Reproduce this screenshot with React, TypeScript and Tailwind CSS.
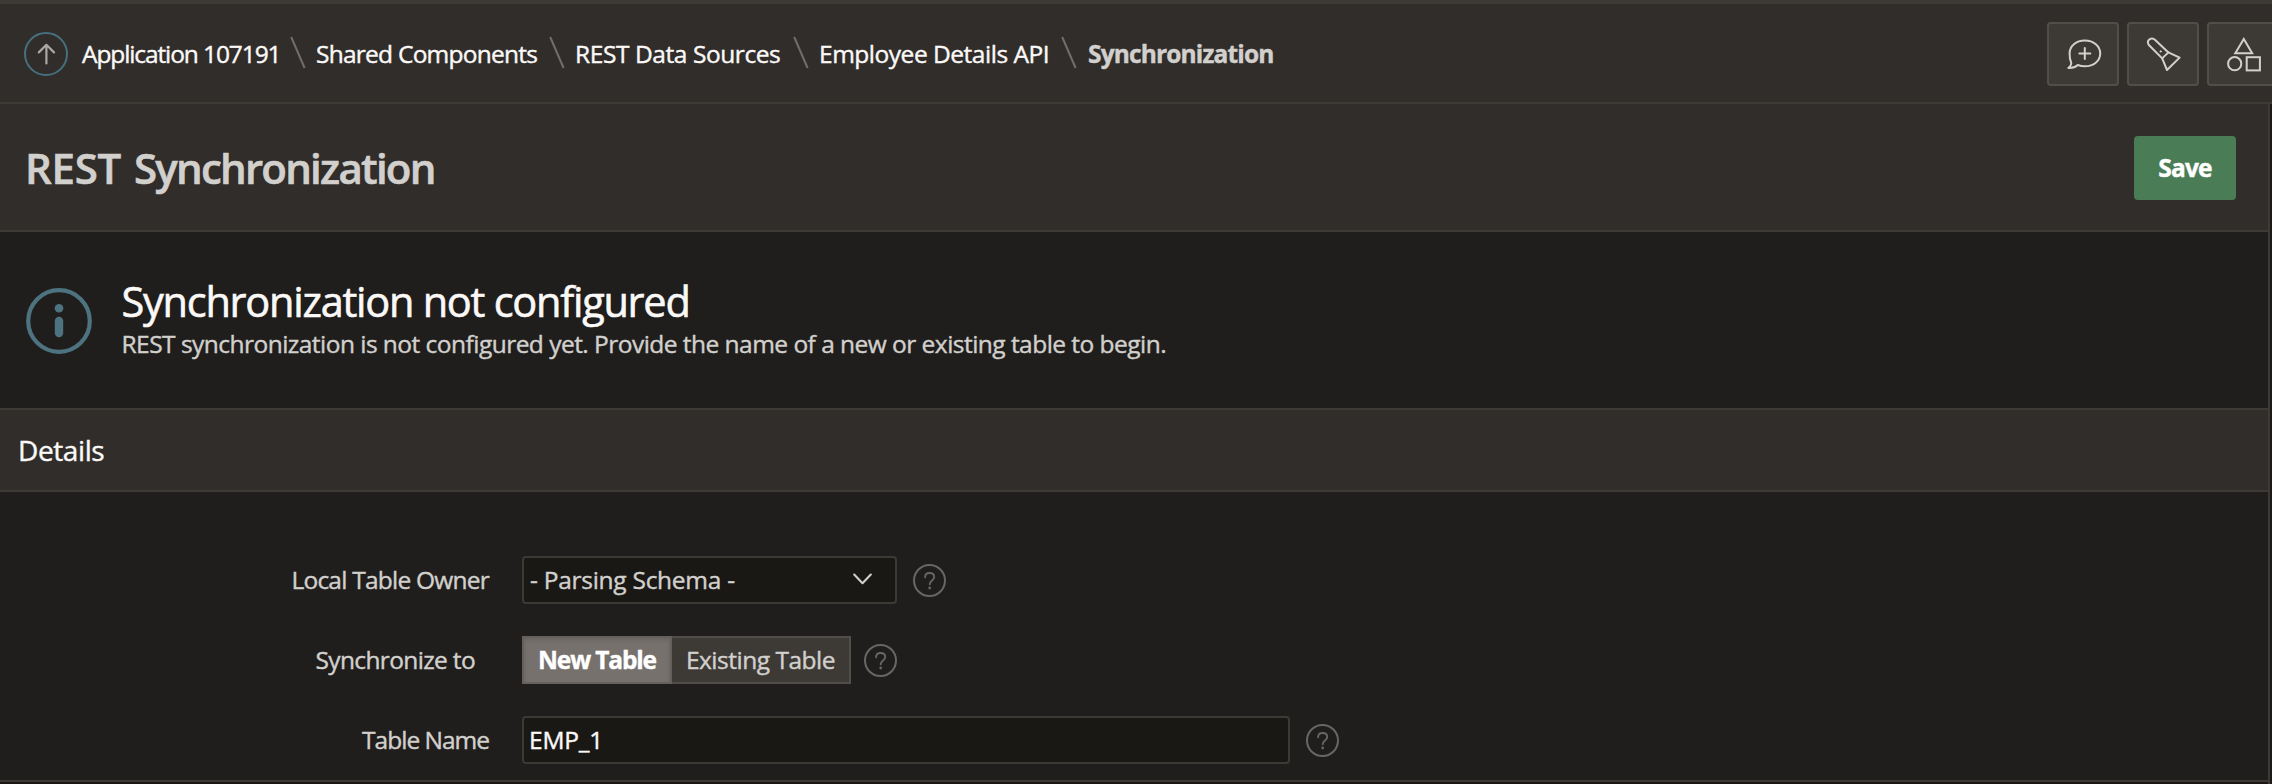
import React from "react";

function Separator() {
  return (
    <svg width="16" height="34" viewBox="0 0 16 34" className="relative -top-px shrink-0" fill="none">
      <path d="M1.2 1 L14.6 32" stroke="#716e6a" strokeWidth="2" />
    </svg>
  );
}

function ToolButton({ label, children }: { label: string; children: React.ReactNode }) {
  return (
    <button
      aria-label={label}
      className="h-16 w-[72px] shrink-0 rounded-[4px] bg-[#3d3a36] shadow-[inset_0_0_0_2px_#514d49]"
    >
      <svg
        width="72"
        height="64"
        viewBox="0 0 72 64"
        fill="none"
        stroke="#d2d0cd"
        strokeWidth="2"
        strokeLinejoin="round"
        strokeLinecap="round"
      >
        {children}
      </svg>
    </button>
  );
}

function HelpIcon() {
  return (
    <svg width="33" height="33" viewBox="0 0 33 33" fill="none" className="shrink-0">
      <circle cx="16.5" cy="16.5" r="15.5" stroke="#686663" strokeWidth="2" />
      <path
        d="M12.1 13.2 C12.1 10.6 14 9 16.6 9 C19.3 9 21.2 10.7 21.2 13.1 C21.2 16.4 16.7 16.5 16.7 20.3"
        stroke="#686663"
        strokeWidth="1.9"
        strokeLinecap="round"
      />
      <circle cx="16.7" cy="24" r="1.4" fill="#686663" />
    </svg>
  );
}

const crumbLink = "whitespace-nowrap text-[#fbf9f8]";

export default function App() {
  return (
    <div className="flex h-[784px] w-[2272px] flex-col overflow-hidden bg-[#201e1c] font-['Open_Sans',sans-serif] text-[24.5px] text-[#d2d0cd] [-webkit-text-stroke:0.4px]">
      <header className="flex h-[104px] shrink-0 items-center justify-between overflow-hidden border-t-4 border-b-2 border-t-[#3d3935] border-b-[#3d3a36] bg-[#312d2a] pl-6">
        <nav className="relative top-px flex items-center">
          <svg width="44" height="44" viewBox="0 0 44 44" fill="none" className="shrink-0">
            <circle cx="22" cy="22" r="21" stroke="#47707f" strokeWidth="2" />
            <path
              d="M22.4 31.5 V12.8 M14.8 20.4 L22.4 12.8 L30 20.4"
              stroke="#aaa8a4"
              strokeWidth="2.2"
              strokeLinecap="round"
              strokeLinejoin="round"
            />
          </svg>
          <span className={`${crumbLink} ml-[14px] w-[208px] tracking-[-1.1px]`}>Application 107191</span>
          <Separator />
          <span className={`${crumbLink} ml-[10px] w-[233px] tracking-[-0.75px]`}>Shared Components</span>
          <Separator />
          <span className={`${crumbLink} ml-[10px] w-[218px] tracking-[-0.42px]`}>REST Data Sources</span>
          <Separator />
          <span className={`${crumbLink} ml-[10px] w-[242px] tracking-[-0.48px]`}>Employee Details API</span>
          <Separator />
          <span className="ml-[11px] font-bold tracking-[-0.85px] whitespace-nowrap">Synchronization</span>
        </nav>
        <div className="relative top-px flex w-[225px] shrink-0 gap-2 overflow-hidden">
          <ToolButton label="Feedback">
            <path d="M24 40 C22.8 37.6 22.6 34.5 22.6 31.5 C22.6 24 29 18.5 37.8 18.5 C46.6 18.5 53.2 24 53.2 31.5 C53.2 39 46.6 44.3 37.8 44.3 C35 44.3 32.8 43.8 30.8 43 C28.3 45.3 25 46.2 21.3 45.9 C23.6 44 24.9 42.2 24 40 Z" />
            <path d="M37.8 26 V37 M32.3 31.5 H43.3" />
          </ToolButton>
          <ToolButton label="Search">
            <path d="M35.2 36.4 L22.1 23.2 C20.4 21.4 20.5 19.2 22 17.8 C23.5 16.3 26.2 16 28.2 17.9 L41.4 30.4 L52.6 35.6 L40 48 Z" />
            <path d="M35.2 36.4 L41.4 30.4" />
            <circle cx="33.7" cy="29.4" r="0.7" fill="#d2d0cd" strokeWidth="1" />
          </ToolButton>
          <ToolButton label="Components">
            <path d="M36.8 17 L45.2 31.3 H28.3 Z" strokeLinejoin="miter" />
            <circle cx="27.7" cy="41.7" r="6.6" />
            <rect x="39.7" y="35.2" width="13.2" height="13.2" strokeLinejoin="miter" />
          </ToolButton>
        </div>
      </header>

      <div className="flex min-h-0 flex-1">
        <main className="flex w-[2268px] shrink-0 flex-col">
          <section className="flex h-32 shrink-0 items-center justify-between border-b-2 border-[#3d3a36] bg-[#312d2a] pt-[2px] pr-8 pl-[25px]">
            <h1 className="flex gap-[13px] text-[42px] leading-[60px] font-semibold whitespace-nowrap [-webkit-text-stroke:0.6px]">
              <span className="tracking-[-0.3px]">REST</span>
              <span className="tracking-[-1.75px]">Synchronization</span>
            </h1>
            <button className="h-16 w-[102px] rounded-[4px] bg-[#4a7d56] pt-px font-bold tracking-[-0.8px] text-white">
              Save
            </button>
          </section>

          <section className="flex h-44 shrink-0 pt-11 pl-[26px]">
            <svg width="66" height="66" viewBox="0 0 66 66" fill="none" className="mt-3 shrink-0">
              <circle cx="33" cy="33" r="30.8" stroke="#4c737f" strokeWidth="4.2" />
              <circle cx="33" cy="20.3" r="4.3" fill="#4c737f" />
              <rect x="28.8" y="28.8" width="8.4" height="20.4" rx="4.2" fill="#4c737f" />
            </svg>
            <div className="ml-[29.5px] pt-px">
              <h2 className="text-[41.5px] leading-[48px] tracking-[-1.25px] whitespace-nowrap text-[#fbf9f8] [-webkit-text-stroke:0.6px]">
                Synchronization not configured
              </h2>
              <p className="leading-[38px] tracking-[-0.53px] whitespace-nowrap">
                REST synchronization is not configured yet. Provide the name of a new or existing table to begin.
              </p>
            </div>
          </section>

          <section className="flex h-[84px] shrink-0 items-center border-y-2 border-[#3d3a36] bg-[#312d2a] pl-[18px]">
            <h3 className="text-[28px] tracking-[-0.4px] text-[#fbf9f8]">Details</h3>
          </section>

          <form className="flex h-[290px] shrink-0 flex-col gap-8 border-b-2 border-[#3d3a36] pt-16">
            <div className="flex h-12 items-center">
              <label className="w-[489px] text-right tracking-[-0.77px] whitespace-nowrap">Local Table Owner</label>
              <div className="ml-[33px] flex h-12 w-[375px] items-center justify-between rounded-[4px] border-2 border-[#3d3a36] bg-[#191815] pr-[23px] pl-[6px]">
                <span className="tracking-[-0.27px]">- Parsing Schema -</span>
                <svg width="19" height="12" viewBox="0 0 19 12" fill="none" className="relative -top-px">
                  <path
                    d="M1.2 1.6 L9.5 10.2 L17.8 1.6"
                    stroke="#d2d0cd"
                    strokeWidth="2.1"
                    strokeLinecap="round"
                    strokeLinejoin="round"
                  />
                </svg>
              </div>
              <span className="ml-4">
                <HelpIcon />
              </span>
            </div>

            <div className="flex h-12 items-center">
              <label className="w-[475px] text-right tracking-[-0.65px] whitespace-nowrap">Synchronize to</label>
              <div className="ml-[47px] flex h-12 w-[329px]">
                <button
                  type="button"
                  className="w-[150px] border-2 border-[#65605c] bg-[#76716d] font-bold tracking-[-1.15px] whitespace-nowrap text-white shadow-[inset_0_2px_4px_rgba(0,0,0,0.12)]"
                >
                  New Table
                </button>
                <button
                  type="button"
                  className="w-[179px] border-2 border-l-0 border-[#514d49] bg-[#3d3a36] tracking-[-0.48px] whitespace-nowrap"
                >
                  Existing Table
                </button>
              </div>
              <span className="ml-[13px]">
                <HelpIcon />
              </span>
            </div>

            <div className="flex h-12 items-center">
              <label className="w-[489px] text-right tracking-[-1px] whitespace-nowrap">Table Name</label>
              <div className="ml-[33px] flex h-12 w-[768px] items-center rounded-[4px] border-2 border-[#3d3a36] bg-[#191815] pt-px pl-[5px] tracking-[-0.2px] text-[#fbf9f8]">
                EMP_1
              </div>
              <span className="ml-4">
                <HelpIcon />
              </span>
            </div>
          </form>
          <div className="h-[2px] bg-[#1b1516]" />
        </main>
        <div className="w-[2px] bg-[#3d3935]" />
        <div className="w-[2px] bg-[#1c1a18]" />
      </div>
    </div>
  );
}
